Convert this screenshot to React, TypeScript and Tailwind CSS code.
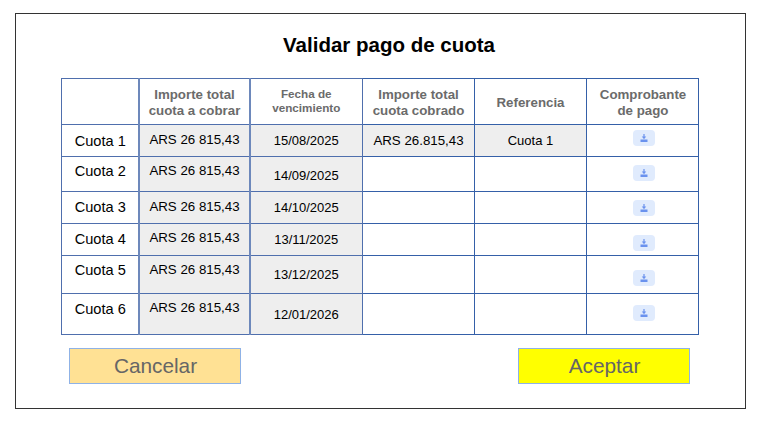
const rows = [
  { name: "Cuota 1", h: "h-[32px]", n: "pt-[8px]", a: "pt-[7px]", d: "pt-[8px]", i: "pt-[5px]", paid: "ARS 26.815,43", ref: "Cuota 1", date: "15/08/2025" },
  { name: "Cuota 2", h: "h-[35px]", n: "pt-[6px]", a: "pt-[6px]", d: "pt-[11px]", i: "pt-[8px]", paid: "", ref: "", date: "14/09/2025" },
  { name: "Cuota 3", h: "h-[32px]", n: "pt-[7px]", a: "pt-[7px]", d: "pt-[8px]", i: "pt-[8px]", paid: "", ref: "", date: "14/10/2025" },
  { name: "Cuota 4", h: "h-[32px]", n: "pt-[7px]", a: "pt-[6px]", d: "pt-[8px]", i: "pt-[11px]", paid: "", ref: "", date: "13/11/2025" },
  { name: "Cuota 5", h: "h-[38px]", n: "pt-[6px]", a: "pt-[6px]", d: "pt-[11px]", i: "pt-[14px]", paid: "", ref: "", date: "13/12/2025" },
  { name: "Cuota 6", h: "h-[41px]", n: "pt-[7px]", a: "pt-[6px]", d: "pt-[13px]", i: "pt-[11px]", paid: "", ref: "", date: "12/01/2026" },
];

const lineL = "border border-[#4f6fad]";
const lineWide = "border border-x-2 border-[#4f6fad] border-x-[#6d88bb]";
const lineR = "border border-[#3560a8]";
const head = "font-bold text-[#6b6b6b] text-center align-middle text-[13.3px] leading-[16px] pt-[2px]";

function DownloadIcon() {
  return (
    <span className="ml-[46px] flex h-[16px] w-[22px] items-center justify-center rounded-[4px] bg-[#e0ebfd]">
      <svg width="10" height="10" viewBox="0 0 10 10" fill="none">
        <path d="M5 1v3" stroke="#6a92ee" strokeWidth="1.2" />
        <path d="M2.8 3.6h4.4L5 6.2z" fill="#6a92ee" />
        <path d="M1.5 6.5h7V9h-7z" fill="#6a92ee" />
      </svg>
    </span>
  );
}

export default function App() {
  return (
    <div className="h-[422px] w-[760px] bg-white pl-[15px] pt-[13px] font-['Liberation_Sans',Arial,sans-serif] text-black">
      <div className="flex h-[396px] w-[731px] flex-col border border-[#333333] pl-[45px] pt-[18px]">
        <h1 className="h-[25px] w-[638px] pl-[18px] text-center text-[20.5px] font-bold leading-[25px]">Validar pago de cuota</h1>
        <table className="mt-[21px] w-[637px] table-fixed border-collapse">
          <colgroup>
            <col className="w-[77px]" />
            <col className="w-[111px]" />
            <col className="w-[113px]" />
            <col className="w-[112px]" />
            <col className="w-[112px]" />
            <col className="w-[112px]" />
          </colgroup>
          <thead>
            <tr className="h-[46px]">
              <th className={lineL} />
              <th className={`${lineWide} ${head} pl-[1px]`}>Importe total<br />cuota a cobrar</th>
              <th className={`${lineL} ${head} !pt-0 pb-[2px] !text-[11.7px] !leading-[14px]`}>Fecha de<br />vencimiento</th>
              <th className={`${lineR} ${head}`}>Importe total<br />cuota cobrado</th>
              <th className={`${lineR} ${head}`}>Referencia</th>
              <th className={`${lineR} ${head} pl-[1px]`}>Comprobante<br />de pago</th>
            </tr>
          </thead>
          <tbody>
            {rows.map((r) => (
              <tr key={r.name} className={r.h}>
                <td className={`${lineL} ${r.n} pl-[1px] text-center align-top text-[14.6px] leading-[16px]`}>{r.name}</td>
                <td className={`${lineWide} ${r.a} bg-[#eeeeee] pl-[1px] text-center align-top text-[13.3px] leading-[15px]`}>ARS 26 815,43</td>
                <td className={`${lineL} ${r.d} bg-[#eeeeee] text-center align-top text-[13px] leading-[15px]`}>{r.date}</td>
                <td className={`${lineR} ${r.paid ? "bg-[#eeeeee]" : ""} pt-[8px] text-center align-top text-[13.3px] leading-[15px]`}>{r.paid}</td>
                <td className={`${lineR} ${r.ref ? "bg-[#eeeeee]" : ""} pt-[8px] text-center align-top text-[13px] leading-[15px]`}>{r.ref}</td>
                <td className={`${lineR} ${r.i} align-top`}><DownloadIcon /></td>
              </tr>
            ))}
          </tbody>
        </table>
        <div className="mt-[13px] flex w-[629px] justify-between pl-[8px]">
          <button className="h-[36px] w-[172px] border border-[#8fb2e6] bg-[#ffe194] pl-[1px] text-[20.8px] text-[#666666]">Cancelar</button>
          <button className="h-[36px] w-[172px] border border-[#8fb2e6] bg-[#ffff00] pl-[1px] text-[20.8px] text-[#666666]">Aceptar</button>
        </div>
      </div>
    </div>
  );
}
